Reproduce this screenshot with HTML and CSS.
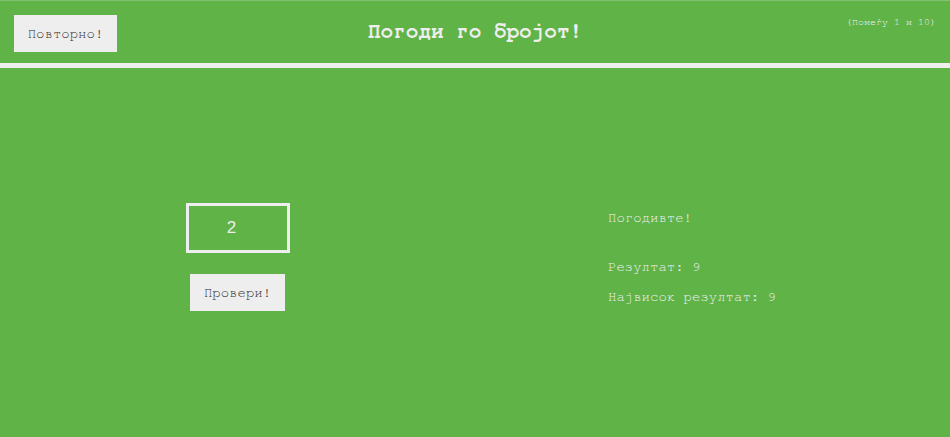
FILE: index.html
```html
<!DOCTYPE html>
<html lang="mk">
<head>
<meta charset="utf-8">
<title>Погоди го бројот!</title>
<link rel="stylesheet" href="styles.css">
</head>
<body>
<header class="header">
  <button class="btn again">Повторно!</button>
  <h1 class="title">Погоди го бројот!</h1>
  <p class="between">(Помеѓу 1 и 10)</p>
</header>
<main class="main">
  <section class="left">
    <input class="guess" type="text" value="2">
    <button class="btn check">Провери!</button>
  </section>
  <section class="right">
    <p class="message">Погодивте!</p>
    <p class="score-line">Резултат: <span>9</span></p>
    <p class="high-line">Највисок резултат: <span>9</span></p>
  </section>
</main>
</body>
</html>
```

FILE: styles.css
```css
* { box-sizing: border-box; }
html, body { margin: 0; padding: 0; }
body {
  width: 950px;
  height: 437px;
  overflow: hidden;
  background: #60b347;
  color: #eee;
  font-family: "FreeMono", "Liberation Mono", "Courier New", monospace;
  border-top: 1px solid #82bf70;
}
.header {
  display: grid;
  grid-template-columns: 1fr auto 1fr;
  align-items: start;
  height: 67px;
  padding: 14px 14px 0 14px;
  border-bottom: 5px solid #eee;
}
.btn {
  background: #eee;
  color: #333;
  border: none;
  font-family: "FreeMono", "Liberation Mono", "Courier New", monospace;
  font-size: 14px;
  cursor: pointer;
  padding: 0;
}
.again {
  justify-self: start;
  width: 103px;
  height: 37px;
}
.title {
  margin: 5px 0 0 0;
  font-size: 21px;
  line-height: 24px;
  font-weight: bold;
  text-align: center;
}
.between {
  justify-self: end;
  margin: 1px 0 0 0;
  font-size: 10px;
  line-height: 12px;
}
.main {
  display: grid;
  grid-template-columns: 475px 475px;
  align-items: start;
}
.left {
  display: flex;
  flex-direction: column;
  align-items: center;
  padding-top: 135px;
}
.guess {
  width: 104px;
  height: 50px;
  border: 3px solid #eee;
  background: transparent;
  color: #eee;
  font-family: "Liberation Sans", Arial, sans-serif;
  font-size: 17px;
  text-align: center;
  padding: 0 12px 0 0;
  outline: none;
}
.check {
  margin-top: 21px;
  width: 95px;
  height: 37px;
}
.right {
  padding-top: 142px;
  padding-left: 133px;
  font-size: 14px;
  line-height: 16px;
}
.right p { margin: 0; }
.score-line { margin-top: 33px !important; }
.high-line { margin-top: 14px !important; }
```
